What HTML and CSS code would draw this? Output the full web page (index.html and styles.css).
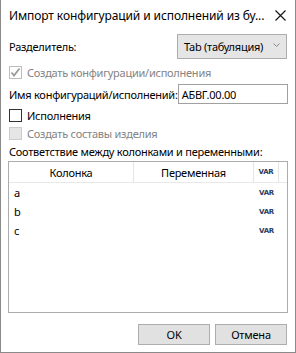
FILE: index.html
```html
<!DOCTYPE html>
<html lang="ru">
<head>
    <meta charset="UTF-8">
    <title>Импорт конфигураций</title>
    <link rel="stylesheet" href="styles.css">
</head>
<body>
    <div class="window">
        <div class="titlebar">
            <span class="title">Импорт конфигураций и исполнений из бу...</span>
            <svg class="close" width="11" height="11" viewBox="0 0 11 11"><path d="M0.5 0.5 L10.5 10.5 M10.5 0.5 L0.5 10.5" stroke="#111" stroke-width="1.1"/></svg>
        </div>

        <div class="content">
            <div class="field-row combo-row">
                <span class="label">Разделитель:</span>
                <div class="combo">
                    <span>Tab (табуляция)</span>
                    <svg width="7" height="4" viewBox="0 0 7 4"><path d="M0.5 0.5 L3.5 3.5 L6.5 0.5" fill="none" stroke="#888" stroke-width="1"/></svg>
                </div>
            </div>

            <label class="check-row disabled">
                <span class="box checked">
                    <svg width="11" height="11" viewBox="0 0 11 11"><path d="M1.5 5.5 L4 8.5 L9.5 1.5" fill="none" stroke="#9a9a9a" stroke-width="1.8"/></svg>
                </span>
                Создать конфигурации/исполнения
            </label>

            <div class="field-row name-row">
                <span class="label">Имя конфигураций/исполнений:</span>
                <div class="textbox">АБВГ.00.00</div>
            </div>

            <label class="check-row first">
                <span class="box"></span>
                Исполнения
            </label>

            <label class="check-row disabled">
                <span class="box empty"></span>
                Создать составы изделия
            </label>

            <div class="caption">Соответствие между колонками и переменными:</div>

            <div class="list">
                <div class="list-head">
                    <div class="col col-name">Колонка</div>
                    <div class="col col-var">Переменная</div>
                    <div class="col col-icon"><span class="var">VAR</span></div>
                    <div class="col col-rest"></div>
                </div>
                <div class="list-row">
                    <div class="col col-name">a</div>
                    <div class="col col-var"></div>
                    <div class="col col-icon"><span class="var">VAR</span></div>
                </div>
                <div class="list-row">
                    <div class="col col-name">b</div>
                    <div class="col col-var"></div>
                    <div class="col col-icon"><span class="var">VAR</span></div>
                </div>
                <div class="list-row">
                    <div class="col col-name">c</div>
                    <div class="col col-var"></div>
                    <div class="col col-icon"><span class="var">VAR</span></div>
                </div>
            </div>

            <div class="buttons">
                <button class="btn">OK</button>
                <button class="btn">Отмена</button>
            </div>
        </div>
    </div>
</body>
</html>
```

FILE: styles.css
```css
* {
    box-sizing: border-box;
}
body {
    margin: 0;
    font-family: "Noto Sans", sans-serif;
    font-size: 11px;
    letter-spacing: -0.25px;
    color: #000;
    background: #fff;
}
.window {
    width: 296px;
    height: 353px;
    border: 1px solid #8a8a8a;
    border-top: none;
    display: flex;
    flex-direction: column;
    background: #fff;
    white-space: nowrap;
}
.titlebar {
    height: 31px;
    display: flex;
    align-items: center;
    justify-content: space-between;
    padding: 0 9px 0 8px;
    flex-shrink: 0;
}
.title {
    font-size: 12px;
    letter-spacing: -0.1px;
    color: #000;
}
.content {
    padding: 0 7px 0 7px;
    display: flex;
    flex-direction: column;
}
.field-row {
    display: flex;
    align-items: center;
    justify-content: space-between;
}
.label {
    padding-left: 1px;
}
.combo-row {
    margin-top: 3px;
    height: 25px;
}
.combo {
    width: 110px;
    flex-shrink: 0;
    height: 25px;
    margin-right: 1px;
    border: 1px solid #adadad;
    background: #e5e5e5;
    display: flex;
    align-items: center;
    justify-content: space-between;
    padding: 0 6px 0 6px;
}
.combo svg {
    margin-top: -3px;
}
.check-row {
    display: flex;
    align-items: center;
    height: 18px;
    margin-top: 4px;
    padding-left: 1px;
    gap: 5px;
}
.check-row.first {
    margin-top: 2px;
}
.check-row + .check-row {
    margin-top: 0;
}
.disabled {
    color: #838383;
}
.box {
    width: 13px;
    height: 13px;
    flex-shrink: 0;
    border: 1px solid #333;
    background: #fff;
    display: flex;
    align-items: center;
    justify-content: center;
}
.box.checked {
    border-color: #bcbcbc;
}
.box.empty {
    border-color: #cccccc;
    background: #e6e6e6;
}
.name-row {
    margin-top: 3px;
    height: 20px;
}
.textbox {
    width: 110px;
    flex-shrink: 0;
    height: 20px;
    margin-right: 1px;
    border: 1px solid #a0a0a0;
    padding: 0 3px;
    display: flex;
    align-items: center;
}
.caption {
    height: 19px;
    padding-left: 1px;
    display: flex;
    align-items: center;
}
.list {
    height: 152px;
    border: 1px solid #acacac;
}
.list-head {
    display: flex;
    height: 21px;
    border-bottom: 1px solid #e8e8e8;
}
.list-head .col {
    border-right: 1px solid #e5e5e5;
    justify-content: center;
}
.list-row {
    display: flex;
    height: 19px;
}
.col {
    display: flex;
    align-items: center;
    flex-shrink: 0;
}
.col-name {
    width: 125px;
}
.list-row .col-name {
    padding-left: 5px;
}
.col-var {
    width: 120px;
}
.col-icon {
    width: 25px;
    justify-content: center;
}
.list-head .col-rest {
    border-right: none;
}
.var {
    font-family: "DejaVu Sans", sans-serif;
    font-size: 7px;
    font-weight: bold;
    color: #2c3b5e;
    letter-spacing: -0.3px;
}
.buttons {
    display: flex;
    justify-content: flex-end;
    gap: 5px;
    margin-top: 11px;
    margin-right: 1px;
}
.btn {
    width: 72px;
    height: 21px;
    border: 1px solid #adadad;
    background: #e1e1e1;
    font-family: "Noto Sans", sans-serif;
    font-size: 11px;
    letter-spacing: -0.2px;
    color: #000;
    padding: 0;
}
```
